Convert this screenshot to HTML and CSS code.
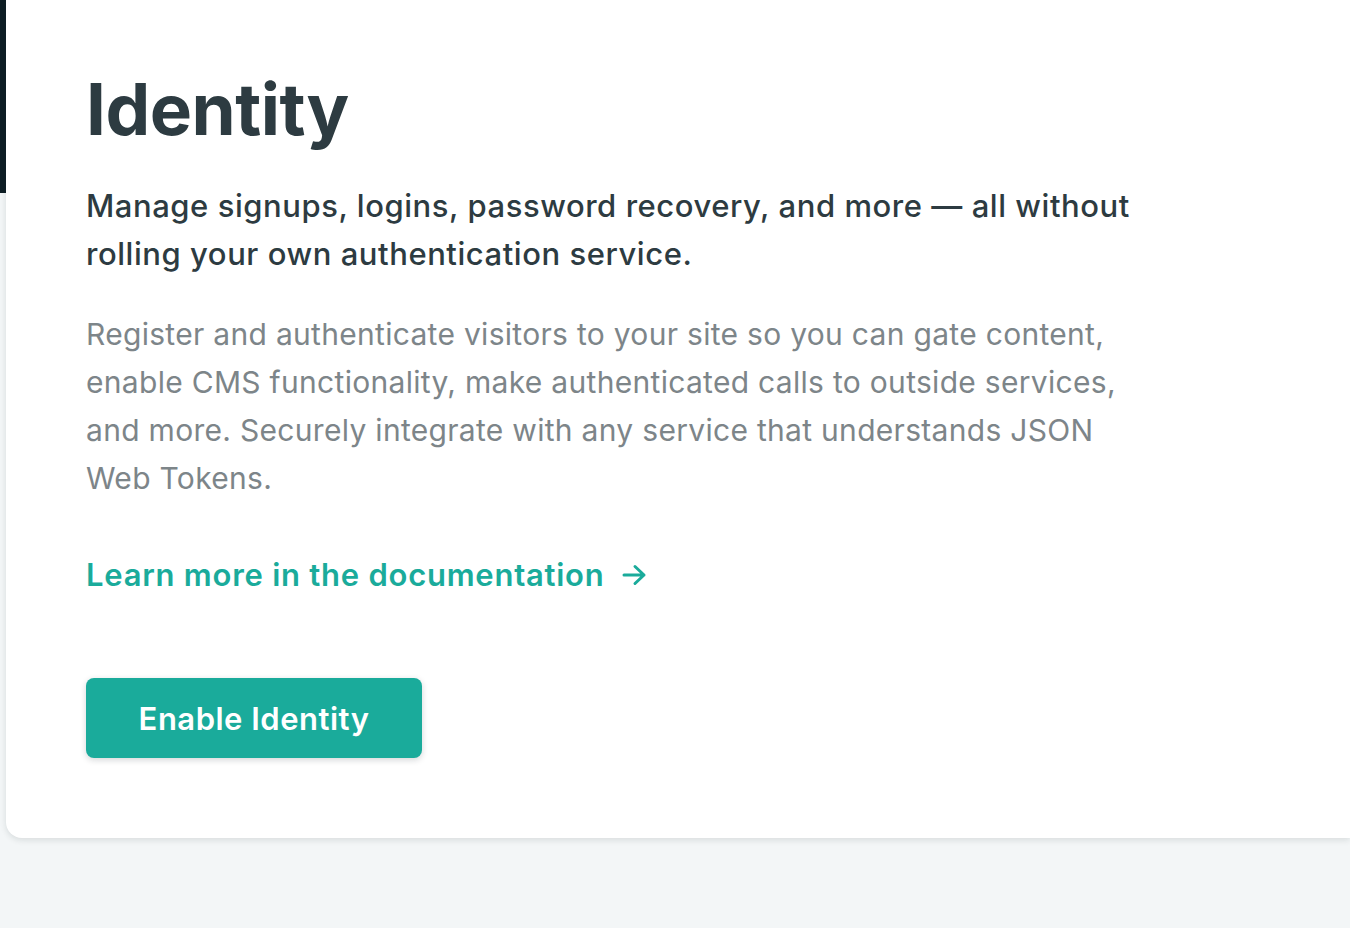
FILE: index.html
```html
<!DOCTYPE html>
<html lang="en">
<head>
<meta charset="utf-8">
<title>Identity</title>
<link rel="stylesheet" href="styles.css">
</head>
<body>
<div class="page">
  <div class="rail"><div class="rail-bar"></div></div>
  <main class="card">
    <h1 class="title">Identity</h1>
    <p class="lead">Manage signups, logins, password recovery, and more — all without rolling your own authentication service.</p>
    <p class="body">Register and authenticate visitors to your site so you can gate content, enable CMS functionality, make authenticated calls to outside services, and more. Securely integrate with any service that understands JSON Web Tokens.</p>
    <a class="doc-link" href="#">Learn more in the documentation<svg class="arrow" width="26" height="24" viewBox="0 0 26 24" aria-hidden="true"><path d="M2 12H22M13 3.5L22 12L13 20.5" fill="none" stroke="currentColor" stroke-width="3" stroke-linecap="round" stroke-linejoin="round"/></svg></a>
    <div class="actions"><button class="btn" type="button">Enable Identity</button></div>
  </main>
</div>
</body>
</html>
```
FILE: styles.css
```css
html, body {
  margin: 0;
  padding: 0;
}
body {
  background: #f3f6f7;
  font-family: Inter, "Noto Sans", sans-serif;
  width: 1350px;
  height: 928px;
  overflow: hidden;
}
.page {
  display: flex;
  align-items: flex-start;
}
.rail {
  width: 6px;
  flex: none;
}
.rail-bar {
  height: 193px;
  background: #0e1e25;
}
.card {
  flex: 1;
  box-sizing: border-box;
  height: 838px;
  background: #fff;
  border-radius: 0 0 0 16px;
  box-shadow: 0 2px 6px rgba(14, 30, 37, 0.12);
  padding: 64px 80px 0;
}
.title {
  margin: 0;
  font-size: 71px;
  line-height: 90px;
  font-weight: 700;
  color: #2d3b41;
  letter-spacing: -0.5px;
}
.lead {
  margin: 28px 0 0;
  max-width: 1060px;
  font-size: 31px;
  line-height: 48px;
  font-weight: 500;
  letter-spacing: 0.55px;
  color: #2d3b41;
}
.body {
  margin: 32px 0 0;
  max-width: 1060px;
  font-size: 30px;
  line-height: 48px;
  font-weight: 400;
  letter-spacing: 0.3px;
  color: #7d8589;
}
.doc-link {
  display: inline-flex;
  align-items: center;
  gap: 18px;
  margin-top: 49px;
  font-size: 31px;
  line-height: 48px;
  font-weight: 600;
  letter-spacing: 0.75px;
  color: #1aab9b;
  text-decoration: none;
}
.arrow {
  display: block;
}
.actions {
  margin-top: 79px;
}
.btn {
  width: 336px;
  height: 80px;
  border: 0;
  border-radius: 8px;
  background: #1aab9b;
  color: #fff;
  font-family: Inter, "Noto Sans", sans-serif;
  font-size: 31px;
  font-weight: 600;
  letter-spacing: 0.5px;
  box-shadow: 0 2px 6px rgba(14, 30, 37, 0.18);
  cursor: pointer;
}
```
